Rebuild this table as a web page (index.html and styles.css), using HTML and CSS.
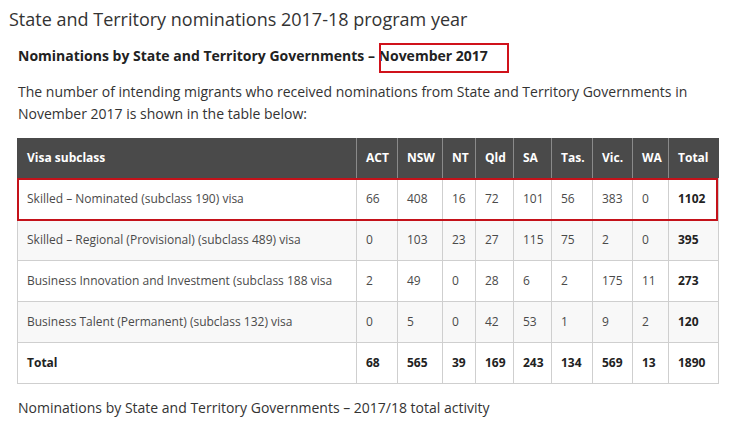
FILE: index.html
```html
<!DOCTYPE html>
<html lang="en">
<head>
<meta charset="utf-8">
<title>State and Territory nominations</title>
<link rel="stylesheet" href="styles.css">
</head>
<body>
<h1 class="title">State and Territory nominations 2017-18 program year</h1>
<div class="content">
  <h2 class="subhead">Nominations by State and Territory Governments – <span class="mark">November 2017</span></h2>
  <p class="intro">The number of intending migrants who received nominations from State and Territory Governments in November 2017 is shown in the table below:</p>
  <div class="table-wrap">
    <table class="data">
      <colgroup>
        <col class="c-visa"><col class="c-act"><col class="c-nsw"><col class="c-nt"><col class="c-qld"><col class="c-sa"><col class="c-tas"><col class="c-vic"><col class="c-wa"><col class="c-total">
      </colgroup>
      <thead>
        <tr><th>Visa subclass</th><th>ACT</th><th>NSW</th><th>NT</th><th>Qld</th><th>SA</th><th>Tas.</th><th>Vic.</th><th>WA</th><th>Total</th></tr>
      </thead>
      <tbody>
        <tr><td>Skilled – Nominated (subclass 190) visa</td><td>66</td><td>408</td><td>16</td><td>72</td><td>101</td><td>56</td><td>383</td><td>0</td><td class="b">1102</td></tr>
        <tr><td>Skilled – Regional (Provisional) (subclass 489) visa</td><td>0</td><td>103</td><td>23</td><td>27</td><td>115</td><td>75</td><td>2</td><td>0</td><td class="b">395</td></tr>
        <tr><td>Business Innovation and Investment (subclass 188 visa</td><td>2</td><td>49</td><td>0</td><td>28</td><td>6</td><td>2</td><td>175</td><td>11</td><td class="b">273</td></tr>
        <tr><td>Business Talent (Permanent) (subclass 132) visa</td><td>0</td><td>5</td><td>0</td><td>42</td><td>53</td><td>1</td><td>9</td><td>2</td><td class="b">120</td></tr>
        <tr class="total"><td>Total</td><td>68</td><td>565</td><td>39</td><td>169</td><td>243</td><td>134</td><td>569</td><td>13</td><td>1890</td></tr>
      </tbody>
    </table>
    <div class="row-mark"></div>
  </div>
  <p class="after">Nominations by State and Territory Governments – 2017/18 total activity</p>
</div>
</body>
</html>
```

FILE: styles.css
```css
* { box-sizing: border-box; }
html, body { margin: 0; padding: 0; background: #fff; }
body {
  font-family: "Open Sans", "DejaVu Sans", sans-serif;
  color: #333;
  padding: 0 0 0 9px;
}
.title {
  margin: 0;
  padding-top: 6px;
  font-size: 18px;
  font-weight: 400;
  line-height: 26px;
  color: #333;
}
.content { padding-left: 8px; width: 709px; }
.subhead {
  margin: 14px 0 0 1px;
  font-size: 14px;
  font-weight: 700;
  line-height: 20px;
  color: #222;
}
.mark { position: relative; }
.mark::after {
  content: "";
  position: absolute;
  left: 0;
  top: -3px;
  width: 126px;
  height: 26px;
  border: 2px solid #d0121b;
}
.intro {
  margin: 15px 0 0 1px;
  font-size: 14px;
  line-height: 22px;
  color: #333;
}
.table-wrap { position: relative; margin-top: 13px; width: 701px; }
.data {
  width: 701px;
  table-layout: fixed;
  border-collapse: collapse;
  font-size: 12px;
  color: #4a4a4a;
}
.c-visa { width: 339px; }
.c-act { width: 41px; }
.c-nsw { width: 45px; }
.c-nt { width: 33px; }
.c-qld { width: 38px; }
.c-sa { width: 38px; }
.c-tas { width: 41px; }
.c-vic { width: 40px; }
.c-wa { width: 36px; }
.c-total { width: 50px; }
.data th {
  background: #4a4a4a;
  color: #fff;
  font-weight: 700;
  text-align: left;
  height: 40px;
  padding: 0 9px;
  border-left: 1px solid #8a8a8a;
  white-space: nowrap;
}
.data th:first-child { border-left: 1px solid #4a4a4a; }
.data td {
  height: 41px;
  padding: 0 9px;
  border: 1px solid #cfcfcf;
  white-space: nowrap;
}
.data tbody tr:nth-child(even) td { background: #f8f8f8; }
.data td.b, .data tr.total td { font-weight: 700; color: #222; }
.row-mark {
  position: absolute;
  left: 0;
  top: 40px;
  width: 701px;
  height: 43px;
  border: 2px solid #c4121a;
  pointer-events: none;
}
.after {
  margin: 13px 0 0 1px;
  font-size: 14px;
  line-height: 22px;
  color: #333;
}
```
